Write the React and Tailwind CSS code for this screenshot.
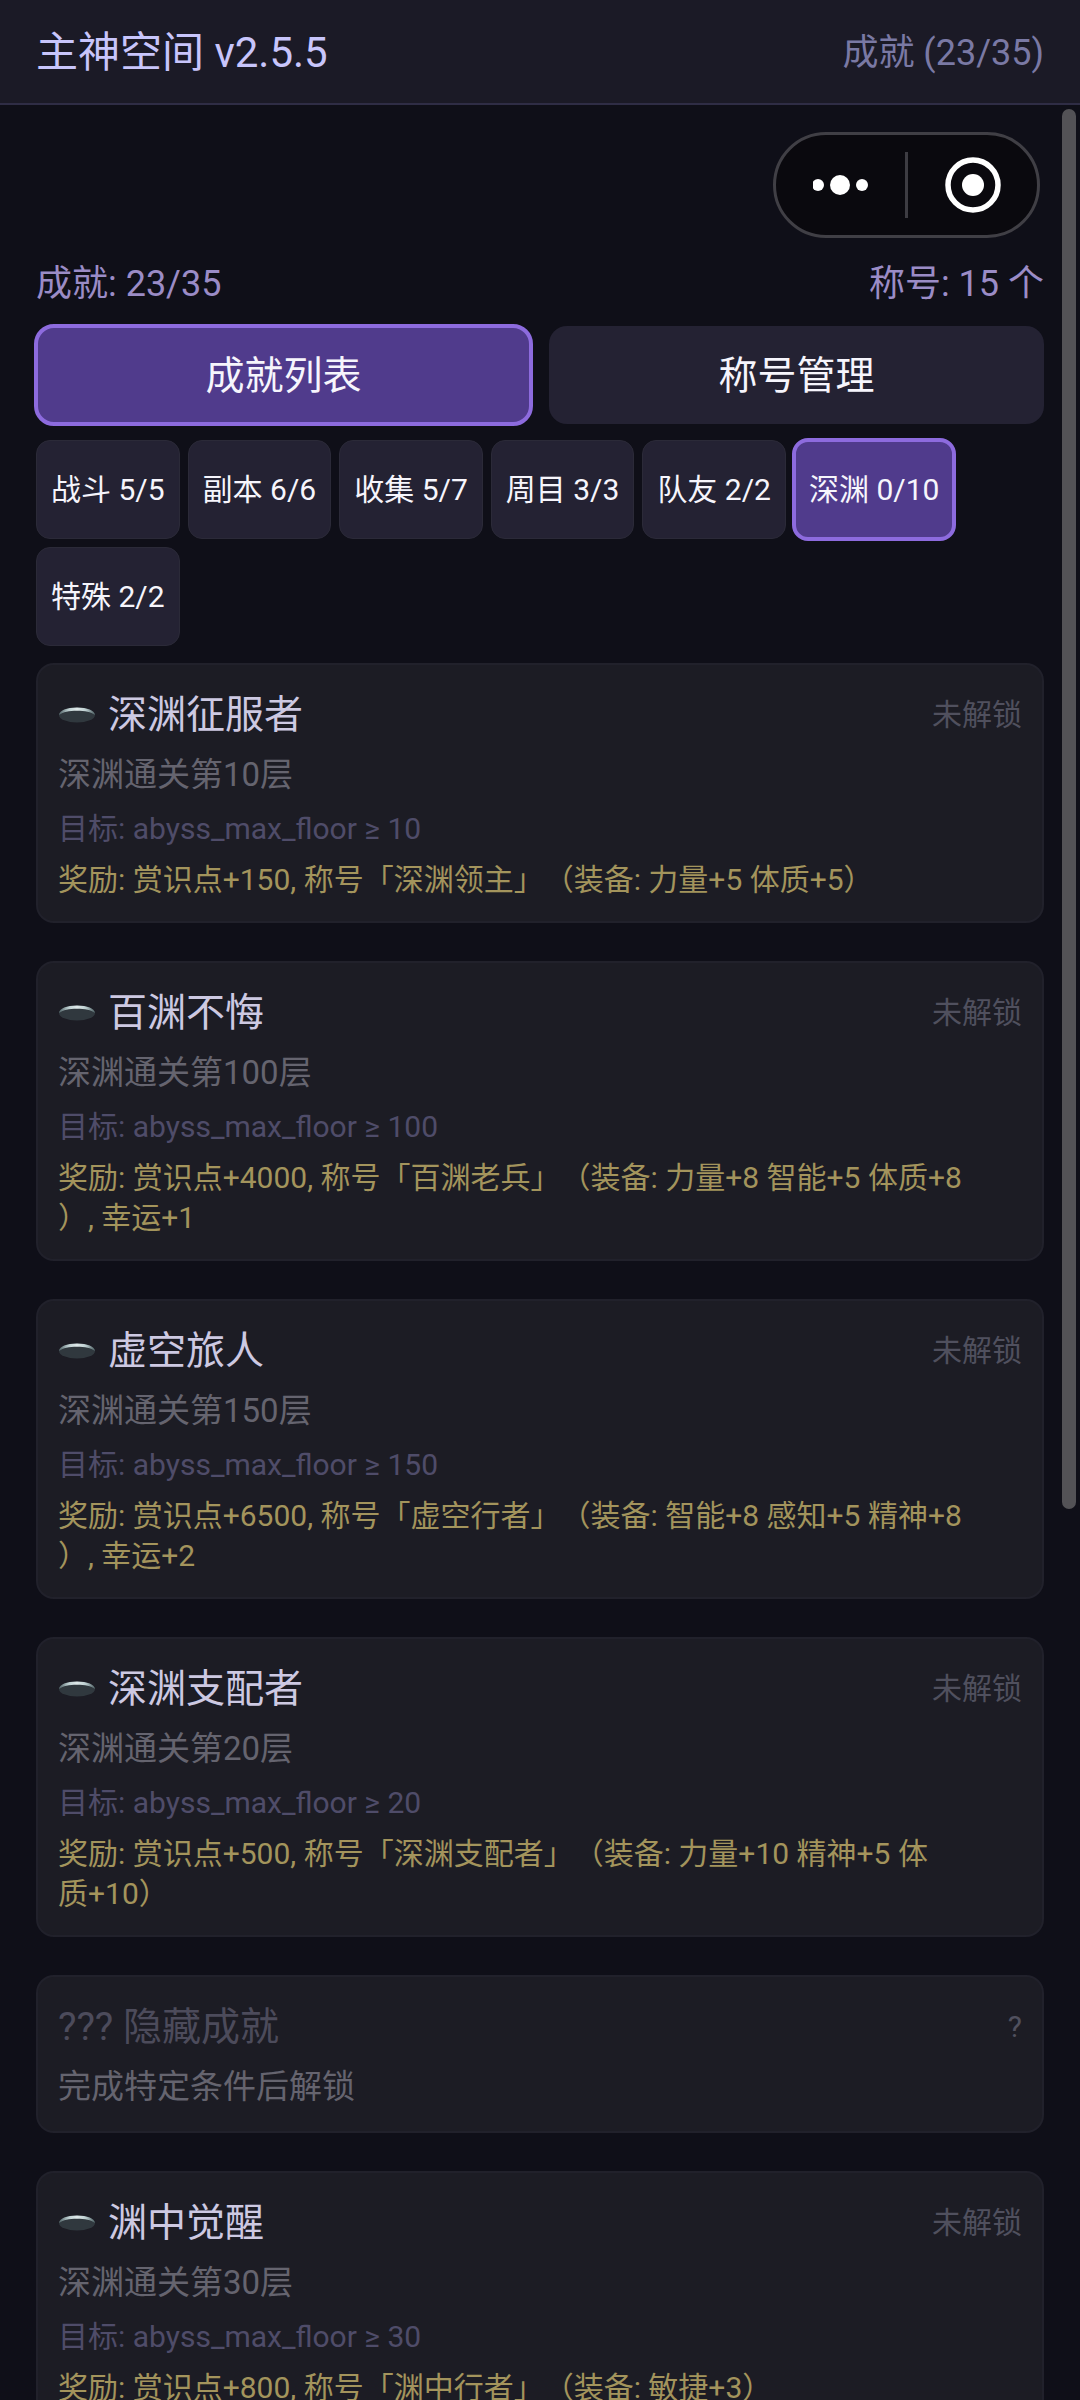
import { useState } from 'react'

const TABS = ['成就列表', '称号管理']

const CATEGORIES = [
  { name: '战斗', done: 5, total: 5 },
  { name: '副本', done: 6, total: 6 },
  { name: '收集', done: 5, total: 7 },
  { name: '周目', done: 3, total: 3 },
  { name: '队友', done: 2, total: 2 },
  { name: '深渊', done: 0, total: 10 },
  { name: '特殊', done: 2, total: 2 },
]

const ACHIEVEMENTS = [
  {
    title: '深渊征服者',
    desc: '深渊通关第10层',
    goal: 'abyss_max_floor ≥ 10',
    reward: '赏识点+150, 称号「深渊领主」（装备: 力量+5 体质+5）',
  },
  {
    title: '百渊不悔',
    desc: '深渊通关第100层',
    goal: 'abyss_max_floor ≥ 100',
    reward: '赏识点+4000, 称号「百渊老兵」（装备: 力量+8 智能+5 体质+8\n）, 幸运+1',
  },
  {
    title: '虚空旅人',
    desc: '深渊通关第150层',
    goal: 'abyss_max_floor ≥ 150',
    reward: '赏识点+6500, 称号「虚空行者」（装备: 智能+8 感知+5 精神+8\n）, 幸运+2',
  },
  {
    title: '深渊支配者',
    desc: '深渊通关第20层',
    goal: 'abyss_max_floor ≥ 20',
    reward: '赏识点+500, 称号「深渊支配者」（装备: 力量+10 精神+5 体\n质+10）',
  },
  { hidden: true, title: '??? 隐藏成就', desc: '完成特定条件后解锁' },
  {
    title: '渊中觉醒',
    desc: '深渊通关第30层',
    goal: 'abyss_max_floor ≥ 30',
    reward: '赏识点+800, 称号「渊中行者」（装备: 敏捷+3）',
  },
]

const HoleIcon = () => (
  <svg viewBox="0 0 38 18" className="h-[18px] w-[38px] shrink-0" aria-hidden="true">
    <defs>
      <linearGradient id="rim" x1="0" x2="1" y1="0" y2="0">
        <stop offset="0" stopColor="#4d5f63" />
        <stop offset="0.25" stopColor="#b9cbcd" />
        <stop offset="0.5" stopColor="#dfe9ea" />
        <stop offset="0.75" stopColor="#b9cbcd" />
        <stop offset="1" stopColor="#4d5f63" />
      </linearGradient>
    </defs>
    <ellipse cx="19" cy="9" rx="18" ry="7.5" fill="#30383e" />
    <path d="M1 9C1 4.6 9 1.5 19 1.5S37 4.6 37 9C33 6 27 4.8 19 4.8S5 6 1 9Z" fill="url(#rim)" />
  </svg>
)

const Capsule = () => (
  <div className="mr-1 flex h-[106px] w-[267px] shrink-0 items-center self-end rounded-full border-3 border-[#403f45] bg-[#0a090e]">
    <button type="button" aria-label="更多" className="flex h-full flex-1 items-center justify-center">
      <svg viewBox="0 0 56 20" className="h-5 w-14" fill="#fff">
        <circle cx="5" cy="10" r="6" />
        <circle cx="27" cy="10" r="10" />
        <circle cx="49" cy="10" r="6" />
      </svg>
    </button>
    <div className="h-[66px] w-[3px] bg-[#3d3c42]" />
    <button type="button" aria-label="关闭" className="flex h-full flex-1 items-center justify-center">
      <svg viewBox="0 0 56 56" className="size-14">
        <circle cx="28" cy="28" r="25" fill="none" stroke="#fff" strokeWidth="5.5" />
        <circle cx="28" cy="28" r="11" fill="#fff" />
      </svg>
    </button>
  </div>
)

const AchievementCard = ({ item }) => (
  <li className="rounded-[18px] border-2 border-[#21212b] bg-[#1c1c24] px-5 pt-[25px] pb-[21px]">
    <div className="flex items-center justify-between">
      <h2
        className={`flex items-center gap-3 text-[39px] leading-[50px] ${
          item.hidden ? 'text-[#4c4b5b]' : 'text-[#cdc9e2]'
        }`}
      >
        {!item.hidden && <HoleIcon />}
        {item.title}
      </h2>
      <span className="text-[30px] leading-[50px] text-[#50505e]">{item.hidden ? '?' : '未解锁'}</span>
    </div>
    <p className="mt-3 text-[33px] leading-[46px] text-[#65646f]">{item.desc}</p>
    {item.goal && <p className="mt-[10px] text-[30px] leading-[42px] text-[#4f4c69]">目标: {item.goal}</p>}
    {item.reward && (
      <p className="mt-[10px] text-[30px] leading-[40px] whitespace-pre-line text-[#a3945c]">
        奖励: {item.reward}
      </p>
    )}
  </li>
)

const App = () => {
  const [tab, setTab] = useState('成就列表')
  const [category, setCategory] = useState('深渊')

  return (
    <div className="flex h-screen flex-col overflow-hidden bg-[#0f0f18] font-[Roboto,'Noto_Sans_CJK_SC',sans-serif] [text-spacing-trim:space-all]">
      <header className="flex h-[105px] shrink-0 items-center justify-between border-b-2 border-[#2f2d45] bg-[#1b1a26] px-9 pt-[3px]">
        <h1 className="text-[42px] leading-[50px] text-[#c8c5fb]">主神空间 v2.5.5</h1>
        <span className="text-[36px] leading-[50px] text-[#7a79a4]">成就 (23/35)</span>
      </header>

      <main className="relative flex min-h-0 flex-1 flex-col overflow-hidden px-9 pt-[27px]">
        <Capsule />

        <div className="mt-[21px] flex shrink-0 justify-between text-[36px] leading-[50px] text-[#9b8cc6]">
          <span>成就: 23/35</span>
          <span>称号: 15 个</span>
        </div>

        <div className="mt-[17px] flex shrink-0 gap-[18px]">
          {TABS.map((name) => (
            <button
              key={name}
              type="button"
              onClick={() => setTab(name)}
              className={`h-[98px] flex-1 rounded-[18px] pt-[2px] text-[39px] text-[#f6f5fc] ${
                tab === name ? 'bg-[#503b8c] outline-4 -outline-offset-2 outline-[#8d6bde]' : 'bg-[#242233]'
              }`}
            >
              {name}
            </button>
          ))}
        </div>

        <div className="mt-4 flex shrink-0 flex-wrap gap-2">
          {CATEGORIES.map(({ name, done, total }) => (
            <button
              key={name}
              type="button"
              onClick={() => setCategory(name)}
              className={`h-[99px] rounded-[14px] border px-[14px] text-[30px] text-[#f6f5fc] ${
                category === name
                  ? 'border-[#8d6bde] bg-[#503b8c] outline-4 -outline-offset-2 outline-[#8d6bde]'
                  : 'border-[#2b2a38] bg-[#242233]'
              }`}
            >
              {name} {done}/{total}
            </button>
          ))}
        </div>

        <ul className="mt-[17px] flex shrink-0 flex-col gap-[38px]">
          {ACHIEVEMENTS.map((item) => (
            <AchievementCard key={item.title} item={item} />
          ))}
        </ul>

        {/* scroll thumb */}
        <div className="absolute top-1 right-1 h-[61%] w-[14px] rounded-full bg-[#535256]" />
      </main>
    </div>
  )
}

export default App
